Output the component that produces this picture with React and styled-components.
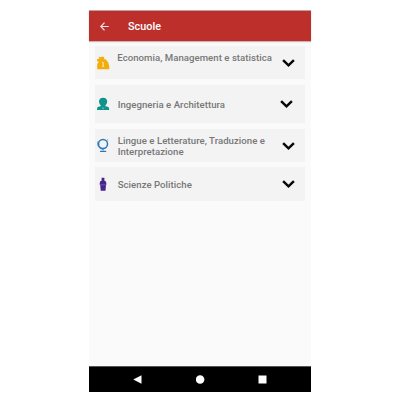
import React from "react";
import styled, { createGlobalStyle } from "styled-components";

const GlobalStyle = createGlobalStyle`
  * { box-sizing: border-box; }
  body { margin: 0; background: #fff; font-family: Roboto, "Liberation Sans", sans-serif; }
`;

const Page = styled.div`
  width: 400px;
  height: 400px;
  padding: 10px 0 8px 89px;
  overflow: hidden;
`;

const Phone = styled.div`
  width: 222px;
  height: 382px;
  display: flex;
  flex-direction: column;
  background: #fafafa;
`;

const AppBar = styled.header`
  height: 31px;
  flex: none;
  display: flex;
  align-items: center;
  padding: 1px 0 0 11px;
  background: #bc2f2b;
  border-top: 1px solid #b9a3a3;
  box-shadow: 0 1px 1px #cbb4b4;
`;

const BackIcon = styled.svg`
  width: 9px;
  height: 9px;
  margin-right: 19px;
  overflow: visible;
`;

const Title = styled.h1`
  margin: 0;
  font-size: 10.8px;
  line-height: 14px;
  font-weight: 500;
  letter-spacing: 0.06px;
  color: #fff;
`;

const List = styled.main`
  flex: 1;
  display: flex;
  flex-direction: column;
  gap: 5.5px;
  padding: 5px 6px 0 5.5px;
`;

const Card = styled.section`
  height: ${(p) => p.$height}px;
  flex: none;
  display: grid;
  grid-template-columns: 23px 1fr 13px;
  align-items: start;
  padding: 0 ${(p) => p.$right}px 0 0;
  background: #f3f3f3;
`;

const SchoolIcon = styled.svg`
  width: 14px;
  height: 14px;
  margin: ${(p) => p.$top}px 0 0 1.5px;
  overflow: visible;
`;

const Label = styled.span`
  margin: ${(p) => p.$top}px 0 0 ${(p) => p.$left}px;
  font-size: 9.6px;
  line-height: 11px;
  font-weight: 500;
  letter-spacing: ${(p) => p.$spacing}px;
  color: #777;
  white-space: pre;
`;

const Chevron = styled.svg`
  width: 13px;
  height: 8px;
  margin-top: ${(p) => p.$top}px;
`;

const NavBar = styled.nav`
  height: 26px;
  flex: none;
  display: grid;
  grid-template-columns: repeat(3, 62.5px);
  justify-content: center;
  align-items: center;
  justify-items: center;
  background: #000;
  border-top: 1px solid #555;
`;

const NavIcon = styled.svg`
  width: 9px;
  height: 9px;
  fill: #fff;
`;

const MoneyBag = () => (
  <>
    <path fill="#f2ac0c" d="M2.4.8 4.8 1.3 6.3.6 8.4 1.3 7.9 3 9.9 3.6 12.2 6.6 13.3 10.4V13.2H1.2V8.2L2.8 5.4 1 5.2V3.2L3.4 2.8Z" />
    <path fill="none" stroke="#fdf0cc" strokeWidth="1" d="M6 6.4h1.2v3.8M6.2 10.3h1.9" />
  </>
);

const Person = () => (
  <>
    <path fill="#10938a" d="M7.1.8C4.6.8 3 2.3 3 4.6c0 2.4 1.6 3.8 2.1 4.3L1.7 10Q1 10.5 1 13.1h12.2q0-2.6-.8-3.1L9.1 8.9c.5-.5 2.1-1.9 2.1-4.3C11.2 2.3 9.6.8 7.1.8Z" />
    <path fill="#a5d8d3" d="m5.6 10.6 1.5.5 1.4-.5-1.4 1.3Z" />
  </>
);

const Globe = () => (
  <g fill="none" stroke="#2b78bd">
    <circle cx="7" cy="6" r="4.5" strokeWidth="1.5" />
    <path strokeWidth=".7" d="M1.9 3.4Q.8 6.4 2.6 9q2 2.4 4.6 2.3M11 1.6l1.2.7M7.1 10.8v2.1" />
    <path strokeWidth="1.2" d="M4 13.4h6.2" />
  </g>
);

const Speaker = () => (
  <>
    <path fill="#47258b" d="M5.6.8h2.8v3l1.6.8.5 3.1h-.5l-.5 6.1H4.7l-.5-6.1h-.6L4 4.6l1.6-.8Z" />
    <path stroke="#8d75b8" strokeWidth=".6" d="M4.2 7.8h5.6" />
  </>
);

const schools = [
  { label: "Economia, Management e statistica", Icon: MoneyBag, height: 33, right: 10, icon: 10, text: 6, left: -0.2, chevron: 12.8, spacing: 0.04 },
  { label: "Ingegneria e Architettura", Icon: Person, height: 38.5, right: 12.5, icon: 12, text: 14, left: 0.2, chevron: 15.3, spacing: 0.04 },
  { label: "Lingue e Letterature, Traduzione e\nInterpretazione", Icon: Globe, height: 33, right: 10, icon: 9.6, text: 6, left: 0.2, chevron: 13.2, spacing: 0.05 },
  { label: "Scienze Politiche", Icon: Speaker, height: 33.5, right: 10, icon: 10.2, text: 11.5, left: 0.2, chevron: 13, spacing: 0.04 },
];

export default function App() {
  return (
    <>
      <GlobalStyle />
      <Page>
        <Phone>
          <AppBar>
            <BackIcon viewBox="0 0 9 9">
              <path d="M8.7 4.5H.8M4.5.7.8 4.5l3.7 3.8" fill="none" stroke="#f7e4e3" strokeWidth="1.2" />
            </BackIcon>
            <Title>Scuole</Title>
          </AppBar>
          <List>
            {schools.map(({ label, Icon, height, right, icon, text, left, chevron, spacing }) => (
              <Card key={label} $height={height} $right={right}>
                <SchoolIcon viewBox="0 0 14 14" $top={icon}>
                  <Icon />
                </SchoolIcon>
                <Label $top={text} $left={left} $spacing={spacing}>{label}</Label>
                <Chevron viewBox="0 0 13 8" $top={chevron}>
                  <path d="M1.1 1.2 6.5 6.3l5.4-5.1" fill="none" stroke="#080808" strokeWidth="2.5" />
                </Chevron>
              </Card>
            ))}
          </List>
          <NavBar>
            <NavIcon viewBox="0 0 9 9"><path d="M8.5.3v8.4L.3 4.5Z" /></NavIcon>
            <NavIcon viewBox="0 0 9 9"><circle cx="4.1" cy="4.5" r="4.3" /></NavIcon>
            <NavIcon viewBox="0 0 9 9"><path d="M.5.5h8v8h-8Z" /></NavIcon>
          </NavBar>
        </Phone>
      </Page>
    </>
  );
}
